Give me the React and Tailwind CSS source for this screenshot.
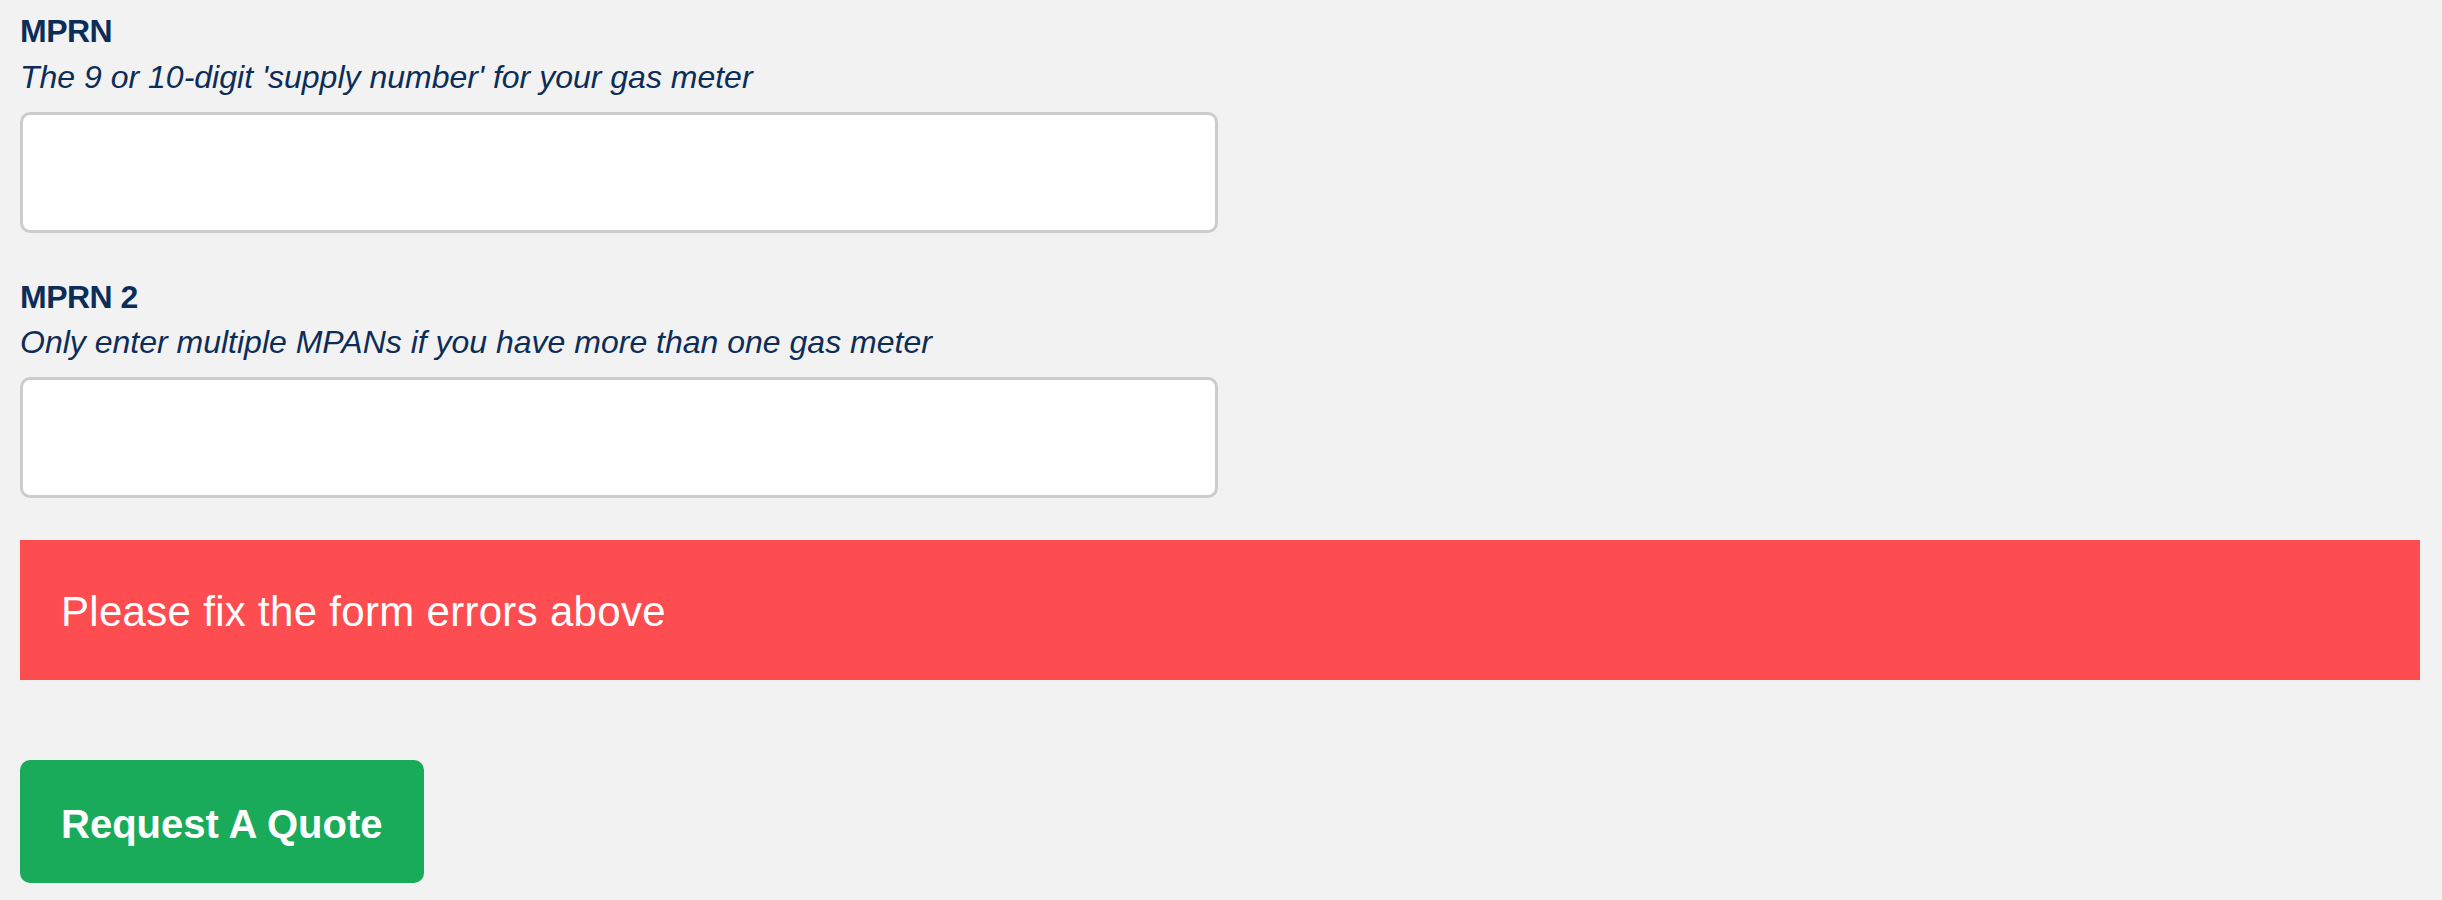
export default function App() {
  return (
    <div className="min-h-[900px] bg-[#f2f2f2] pl-[20px] pr-[22px] pt-[11px] font-['Liberation_Sans',Arial,sans-serif]">

      {/* MPRN */}
      <div className="w-[1198px]">
        <label className="block text-[32px] leading-[40px] font-bold text-[#0c2d57] tracking-[-0.5px]">MPRN</label>
        <p className="mt-[6px] text-[32px] leading-[40px] italic text-[#0c2d57]">
          The 9 or 10-digit 'supply number' for your gas meter
        </p>
        <input className="mt-[15px] block w-full h-[121px] bg-white border-[3px] border-[#cccccc] rounded-[10px] outline-none" />
      </div>

      {/* MPRN 2 */}
      <div className="w-[1198px] mt-[44px]">
        <label className="block text-[32px] leading-[40px] font-bold text-[#0c2d57] tracking-[-0.5px]">MPRN 2</label>
        <p className="mt-[5px] text-[32px] leading-[40px] italic text-[#0c2d57]">
          Only enter multiple MPANs if you have more than one gas meter
        </p>
        <input className="mt-[15px] block w-full h-[121px] bg-white border-[3px] border-[#cccccc] rounded-[10px] outline-none" />
      </div>

      {/* Error */}
      <div className="mt-[42px] h-[140px] bg-[#fd4d50] pl-[41px] flex items-center">
        <p className="text-[42px] leading-[56px] tracking-[0.3px] text-white pt-[4px]">Please fix the form errors above</p>
      </div>

      {/* Submit */}
      <button className="mt-[80px] h-[123px] px-[41px] bg-[#19ab5a] rounded-[10px] text-white text-[40px] leading-[48px] font-bold pt-[5px]">
        Request A Quote
      </button>
    </div>
  )
}
